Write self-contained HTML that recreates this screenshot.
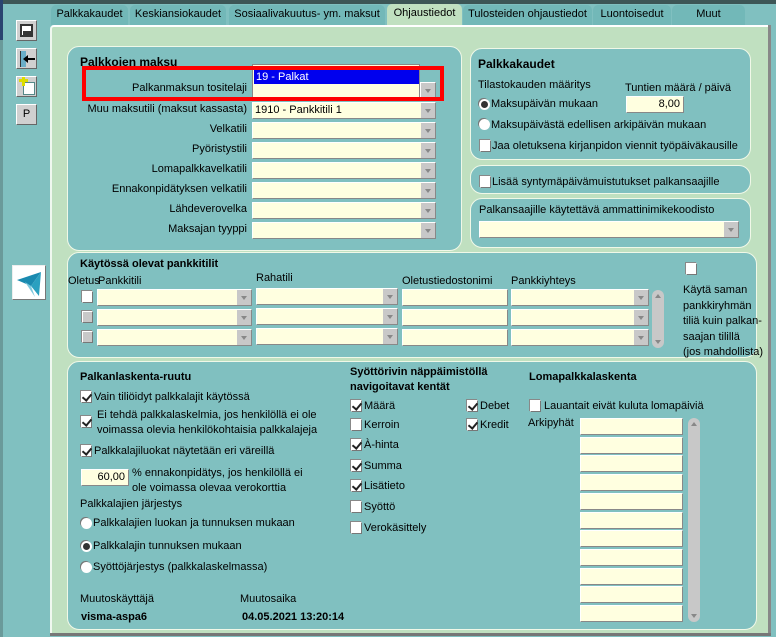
<!DOCTYPE html>
<html><head><meta charset="utf-8"><style>
*{box-sizing:border-box;margin:0;padding:0}
body{width:776px;height:637px;overflow:hidden;background:#80c0c0;font-family:"Liberation Sans",sans-serif;font-size:11px;color:#000;position:relative}
.a{position:absolute;white-space:nowrap}
.sec{position:absolute;background:#80c0c0;border:1px solid #f0f8e8;border-radius:12px}
.tab{position:absolute;top:5px;height:20px;background:#72b8b8;border-radius:5px 5px 0 0;text-align:center;line-height:18px;font-size:11px}
.dd{position:absolute;height:17px;background:#ffffe0;border:1px solid #fff;border-right-color:#888;border-bottom-color:#888}
.dd::after{content:"";position:absolute;right:0;top:0;width:14px;height:15px;background:#c8c8c8 ;}
.dd::before{content:"";position:absolute;right:4px;top:6px;border-left:3px solid transparent;border-right:3px solid transparent;border-top:4px solid #888;z-index:2}
.in{position:absolute;height:17px;background:#ffffe0;border:1px solid #fff;border-right-color:#888;border-bottom-color:#888;text-align:right;padding-right:3px;line-height:15px}
.cb{position:absolute;width:11px;height:12px;background:#fff;border:1px solid #777;border-top-color:#fff;border-left-color:#fff;box-shadow:-1px -1px 0 #888}
.cb.g{background:#c8c8c8}
.cb.c::after{content:"";position:absolute;left:2px;top:0px;width:4px;height:7px;border-right:2px solid #222;border-bottom:2px solid #222;transform:rotate(40deg)}
.rb{position:absolute;width:11px;height:11px;border-radius:50%;background:#fff;box-shadow:-1px -1px 0 #777}
.rb.on::after{content:"";position:absolute;left:2px;top:2px;width:7px;height:7px;border-radius:50%;background:#333}
.b{font-weight:bold}
.btn{position:absolute;left:16px;width:21px;height:21px;background:#d0d0d0;border:1px solid #fff;border-right-color:#666;border-bottom-color:#666}
.up{position:absolute;left:3px;top:4px;border-left:3px solid transparent;border-right:3px solid transparent;border-bottom:4px solid #888}
.dn{position:absolute;left:3px;bottom:4px;border-left:3px solid transparent;border-right:3px solid transparent;border-top:4px solid #888}
</style></head><body>
<div class="a" style="left:0;top:0;width:776px;height:4px;background:#3d5656"></div>
<div class="a" style="left:0;top:0;width:3px;height:40px;background:#2a4470"></div>
<div class="a" style="left:0;top:40px;width:3px;height:597px;background:#6a9a9a"></div>
<div class="tab" style="left:51px;width:77px">Palkkakaudet</div>
<div class="tab" style="left:130px;width:96px">Keskiansiokaudet</div>
<div class="tab" style="left:229px;width:156px">Sosiaalivakuutus- ym. maksut</div>
<div class="tab" style="left:387px;width:75px;background:#c0e0c0;top:4px;height:23px">Ohjaustiedot</div>
<div class="tab" style="left:463px;width:129px">Tulosteiden ohjaustiedot</div>
<div class="tab" style="left:593px;width:78px">Luontoisedut</div>
<div class="tab" style="left:672px;width:73px">Muut</div>
<div class="a" style="left:50px;top:25px;width:718px;height:608px;background:#c0e0c0;border-top:2px solid #fff;border-left:2px solid #f0f8f0;border-radius:4px 0 0 0"></div>
<div class="a" style="left:768px;top:25px;width:3px;height:610px;background:#888"></div>
<div class="a" style="left:50px;top:633px;width:721px;height:3px;background:#777"></div>
<div class="btn" style="top:20px"><div class="a" style="left:3px;top:3px;width:13px;height:13px;border:2px solid #333;background:#fff"></div><div class="a" style="left:6px;top:10px;width:8px;height:5px;background:#333"></div></div>
<div class="btn" style="top:48px"><div class="a" style="left:3px;top:2px;width:6px;height:16px;background:#6aaec8;border-left:1px solid #333"></div><div class="a" style="left:8px;top:9px;width:10px;height:2px;background:#000"></div><div class="a" style="left:6px;top:6px;border-right:5px solid #000;border-top:4px solid transparent;border-bottom:4px solid transparent"></div></div>
<div class="btn" style="top:76px"><div class="a" style="left:6px;top:5px;width:12px;height:13px;background:#fff;border:1px solid #588"></div><div class="a" style="left:2px;top:2px;width:9px;height:3px;background:#dd0"></div><div class="a" style="left:5px;top:0px;width:3px;height:9px;background:#dd0"></div></div>
<div class="btn" style="top:104px;text-align:center;line-height:19px">P</div>
<div class="a" style="left:12px;top:265px;width:34px;height:35px;background:#fff;border:1px solid #eee;border-right-color:#777;border-bottom-color:#777">
<svg width="32" height="33" viewBox="0 0 32 33"><path d="M4 14 L28 6 L18 20 Z" fill="#1a8ab0"/><path d="M18 20 L28 6 L26 30 Z" fill="#2aa0c0"/><path d="M12 16 L18 20 L22 31 Z" fill="#7cc8dd"/></svg></div>

<div class="sec" style="left:67px;top:46px;width:395px;height:205px"></div>
<div class="a b" style="left:80px;top:55px;font-size:12px">Palkkojen maksu</div>
<div class="a" style="left:60px;top:82px;width:187px;text-align:right">Palkanmaksun tositelaji</div>
<div class="dd" style="left:420px;top:82px;width:16px"></div>
<div class="a" style="left:252px;top:64px;width:168px;height:36px;background:#ffffe0;border:1px solid #888"><div class="a" style="left:1px;top:5px;width:165px;height:14px;background:#0000ee;color:#fff;padding-left:2px;line-height:14px">19 - Palkat</div></div>
<div class="a" style="left:82px;top:66px;width:362px;height:35px;border:4px solid #f00"></div>
<div class="a" style="left:60px;top:103px;width:187px;text-align:right">Muu maksutili (maksut kassasta)</div>
<div class="a" style="left:60px;top:123px;width:187px;text-align:right">Velkatili</div>
<div class="a" style="left:60px;top:143px;width:187px;text-align:right">Pyöristystili</div>
<div class="a" style="left:60px;top:163px;width:187px;text-align:right">Lomapalkkavelkatili</div>
<div class="a" style="left:60px;top:183px;width:187px;text-align:right">Ennakonpidätyksen velkatili</div>
<div class="a" style="left:60px;top:203px;width:187px;text-align:right">Lähdeverovelka</div>
<div class="a" style="left:60px;top:223px;width:187px;text-align:right">Maksajan tyyppi</div>
<div class="dd" style="left:252px;top:102px;width:184px;padding-left:2px;line-height:15px">1910 - Pankkitili 1</div>
<div class="dd" style="left:252px;top:122px;width:184px"></div>
<div class="dd" style="left:252px;top:142px;width:184px"></div>
<div class="dd" style="left:252px;top:162px;width:184px"></div>
<div class="dd" style="left:252px;top:182px;width:184px"></div>
<div class="dd" style="left:252px;top:202px;width:184px"></div>
<div class="dd" style="left:252px;top:222px;width:184px"></div>

<div class="sec" style="left:470px;top:48px;width:281px;height:112px"></div>
<div class="a b" style="left:478px;top:57px;font-size:12px">Palkkakaudet</div>
<div class="a" style="left:478px;top:79px">Tilastokauden määritys</div>
<div class="a" style="left:625px;top:82px">Tuntien määrä / päivä</div>
<div class="rb on" style="left:479px;top:99px"></div><div class="a" style="left:491px;top:98px">Maksupäivän mukaan</div>
<div class="in" style="left:626px;top:96px;width:58px">8,00</div>
<div class="rb" style="left:479px;top:119px"></div><div class="a" style="left:491px;top:119px">Maksupäivästä edellisen arkipäivän mukaan</div>
<div class="cb" style="left:480px;top:140px"></div><div class="a" style="left:492px;top:140px">Jaa oletuksena kirjanpidon viennit työpäiväkausille</div>
<div class="sec" style="left:470px;top:165px;width:281px;height:29px"></div>
<div class="cb" style="left:480px;top:176px"></div><div class="a" style="left:492px;top:176px">Lisää syntymäpäivämuistutukset palkansaajille</div>
<div class="sec" style="left:470px;top:198px;width:281px;height:50px"></div>
<div class="a" style="left:479px;top:204px">Palkansaajille käytettävä ammattinimikekoodisto</div>
<div class="dd" style="left:479px;top:221px;width:260px"></div>

<div class="sec" style="left:67px;top:252px;width:690px;height:106px"></div>
<div class="a b" style="left:80px;top:258px">Käytössä olevat pankkitilit</div>
<div class="a" style="left:68px;top:275px">Oletus</div>
<div class="a" style="left:98px;top:275px">Pankkitili</div>
<div class="a" style="left:256px;top:272px">Rahatili</div>
<div class="a" style="left:402px;top:275px">Oletustiedostonimi</div>
<div class="a" style="left:511px;top:275px">Pankkiyhteys</div>
<div class="cb" style="left:82px;top:291px"></div><div class="cb g" style="left:82px;top:311px"></div><div class="cb g" style="left:82px;top:331px"></div>
<div class="dd" style="left:97px;top:289px;width:155px"></div><div class="dd" style="left:97px;top:309px;width:155px"></div><div class="dd" style="left:97px;top:329px;width:155px"></div>
<div class="dd" style="left:256px;top:288px;width:142px"></div><div class="dd" style="left:256px;top:308px;width:142px"></div><div class="dd" style="left:256px;top:328px;width:142px"></div>
<div class="in" style="left:402px;top:289px;width:106px"></div><div class="in" style="left:402px;top:309px;width:106px"></div><div class="in" style="left:402px;top:329px;width:106px"></div>
<div class="dd" style="left:511px;top:289px;width:138px"></div><div class="dd" style="left:511px;top:309px;width:138px"></div><div class="dd" style="left:511px;top:329px;width:138px"></div>
<div class="a" style="left:652px;top:290px;width:12px;height:58px;background:#c8c8c8;border-radius:6px"><div class="up"></div><div class="dn"></div></div>
<div class="cb" style="left:686px;top:263px"></div>
<div class="a" style="left:683px;top:283px;line-height:15.5px">Käytä saman<br>pankkiryhmän<br>tiliä kuin palkan-<br>saajan tilillä<br>(jos mahdollista)</div>

<div class="sec" style="left:67px;top:361px;width:690px;height:269px"></div>
<div class="a b" style="left:80px;top:371px">Palkanlaskenta-ruutu</div>
<div class="cb c" style="left:81px;top:391px"></div><div class="a" style="left:94px;top:391px">Vain tiliöidyt palkkalajit käytössä</div>
<div class="cb c" style="left:81px;top:416px"></div><div class="a" style="left:97px;top:408px;line-height:15px">Ei tehdä palkkalaskelmia, jos henkilöllä ei ole<br>voimassa olevia henkilökohtaisia palkkalajeja</div>
<div class="cb c" style="left:81px;top:445px"></div><div class="a" style="left:94px;top:445px">Palkkalajiluokat näytetään eri väreillä</div>
<div class="in" style="left:81px;top:469px;width:48px">60,00</div>
<div class="a" style="left:132px;top:466px;line-height:15px">% ennakonpidätys, jos henkilöllä ei<br>ole voimassa olevaa verokorttia</div>
<div class="a" style="left:80px;top:498px">Palkkalajien järjestys</div>
<div class="rb" style="left:81px;top:518px"></div><div class="a" style="left:93px;top:517px">Palkkalajien luokan ja tunnuksen mukaan</div>
<div class="rb on" style="left:81px;top:541px"></div><div class="a" style="left:93px;top:540px">Palkkalajin tunnuksen mukaan</div>
<div class="rb" style="left:81px;top:562px"></div><div class="a" style="left:93px;top:561px">Syöttöjärjestys (palkkalaskelmassa)</div>
<div class="a" style="left:80px;top:593px">Muutoskäyttäjä</div>
<div class="a" style="left:240px;top:593px">Muutosaika</div>
<div class="a b" style="left:81px;top:611px">visma-aspa6</div>
<div class="a b" style="left:242px;top:611px">04.05.2021 13:20:14</div>

<div class="a b" style="left:350px;top:365px;line-height:15px">Syöttörivin näppäimistöllä<br>navigoitavat kentät</div>
<div class="cb c" style="left:351px;top:400px"></div><div class="a" style="left:364px;top:400px">Määrä</div>
<div class="cb" style="left:351px;top:419px"></div><div class="a" style="left:364px;top:419px">Kerroin</div>
<div class="cb c" style="left:351px;top:439px"></div><div class="a" style="left:364px;top:439px">À-hinta</div>
<div class="cb c" style="left:351px;top:460px"></div><div class="a" style="left:364px;top:460px">Summa</div>
<div class="cb c" style="left:351px;top:480px"></div><div class="a" style="left:364px;top:480px">Lisätieto</div>
<div class="cb" style="left:351px;top:501px"></div><div class="a" style="left:364px;top:501px">Syöttö</div>
<div class="cb" style="left:351px;top:522px"></div><div class="a" style="left:364px;top:522px">Verokäsittely</div>
<div class="cb c" style="left:467px;top:400px"></div><div class="a" style="left:480px;top:400px">Debet</div>
<div class="cb c" style="left:467px;top:419px"></div><div class="a" style="left:480px;top:419px">Kredit</div>

<div class="a b" style="left:529px;top:371px">Lomapalkkalaskenta</div>
<div class="cb" style="left:530px;top:400px"></div><div class="a" style="left:544px;top:400px">Lauantait eivät kuluta lomapäiviä</div>
<div class="a" style="left:528px;top:417px">Arkipyhät</div>
<div class="in" style="left:580px;top:418px;width:103px"></div>
<div class="in" style="left:580px;top:437px;width:103px"></div>
<div class="in" style="left:580px;top:455px;width:103px"></div>
<div class="in" style="left:580px;top:474px;width:103px"></div>
<div class="in" style="left:580px;top:493px;width:103px"></div>
<div class="in" style="left:580px;top:512px;width:103px"></div>
<div class="in" style="left:580px;top:530px;width:103px"></div>
<div class="in" style="left:580px;top:549px;width:103px"></div>
<div class="in" style="left:580px;top:568px;width:103px"></div>
<div class="in" style="left:580px;top:586px;width:103px"></div>
<div class="in" style="left:580px;top:605px;width:103px"></div>
<div class="a" style="left:688px;top:418px;width:12px;height:204px;background:#c8c8c8;border-radius:6px"><div class="up"></div><div class="dn"></div></div>
</body></html>
